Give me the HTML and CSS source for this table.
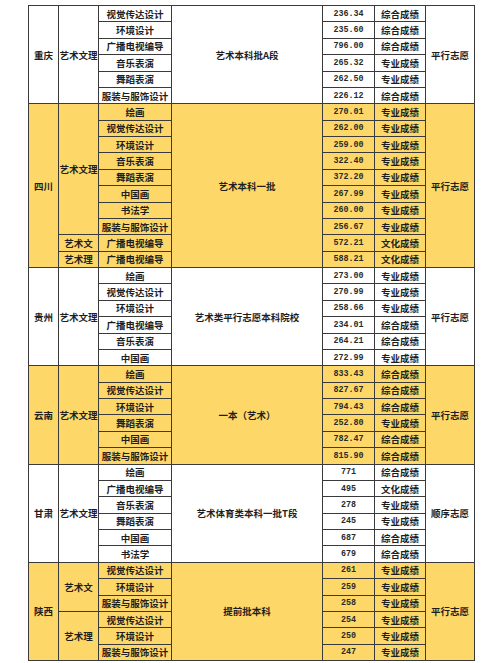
FILE: index.html
```html
<!DOCTYPE html>
<html lang="zh">
<head>
<meta charset="utf-8">
<link rel="stylesheet" href="styles.css">
</head>
<body>
<table class="sheet">
  <colgroup>
    <col class="c1"><col class="c2"><col class="c3"><col class="c4"><col class="c5"><col class="c6"><col class="c7">
  </colgroup>
  <tbody class="plain">
    <tr><td rowspan="6">重庆</td><td rowspan="6">艺术文理</td><td>视觉传达设计</td><td rowspan="6">艺术本科批A段</td><td class="num">236.34</td><td>综合成绩</td><td rowspan="6">平行志愿</td></tr>
    <tr><td>环境设计</td><td class="num">235.60</td><td>综合成绩</td></tr>
    <tr><td>广播电视编导</td><td class="num">796.00</td><td>综合成绩</td></tr>
    <tr><td>音乐表演</td><td class="num">265.32</td><td>专业成绩</td></tr>
    <tr><td>舞蹈表演</td><td class="num">262.50</td><td>专业成绩</td></tr>
    <tr><td>服装与服饰设计</td><td class="num">226.12</td><td>综合成绩</td></tr>
  </tbody>
  <tbody class="gold">
    <tr><td rowspan="10">四川</td><td rowspan="8">艺术文理</td><td>绘画</td><td rowspan="10">艺术本科一批</td><td class="num">270.01</td><td>专业成绩</td><td rowspan="10">平行志愿</td></tr>
    <tr><td>视觉传达设计</td><td class="num">262.00</td><td>专业成绩</td></tr>
    <tr><td>环境设计</td><td class="num">259.00</td><td>专业成绩</td></tr>
    <tr><td>音乐表演</td><td class="num">322.40</td><td>专业成绩</td></tr>
    <tr><td>舞蹈表演</td><td class="num">372.20</td><td>专业成绩</td></tr>
    <tr><td>中国画</td><td class="num">267.99</td><td>专业成绩</td></tr>
    <tr><td>书法学</td><td class="num">260.00</td><td>专业成绩</td></tr>
    <tr><td>服装与服饰设计</td><td class="num">256.67</td><td>专业成绩</td></tr>
    <tr><td>艺术文</td><td>广播电视编导</td><td class="num">572.21</td><td>文化成绩</td></tr>
    <tr><td>艺术理</td><td>广播电视编导</td><td class="num">588.21</td><td>文化成绩</td></tr>
  </tbody>
  <tbody class="plain">
    <tr><td rowspan="6">贵州</td><td rowspan="6">艺术文理</td><td>绘画</td><td rowspan="6">艺术类平行志愿本科院校</td><td class="num">273.00</td><td>专业成绩</td><td rowspan="6">平行志愿</td></tr>
    <tr><td>视觉传达设计</td><td class="num">270.99</td><td>专业成绩</td></tr>
    <tr><td>环境设计</td><td class="num">258.66</td><td>专业成绩</td></tr>
    <tr><td>广播电视编导</td><td class="num">234.01</td><td>综合成绩</td></tr>
    <tr><td>音乐表演</td><td class="num">264.21</td><td>综合成绩</td></tr>
    <tr><td>中国画</td><td class="num">272.99</td><td>专业成绩</td></tr>
  </tbody>
  <tbody class="gold">
    <tr><td rowspan="6">云南</td><td rowspan="6">艺术文理</td><td>绘画</td><td rowspan="6">一本（艺术）</td><td class="num">833.43</td><td>综合成绩</td><td rowspan="6">平行志愿</td></tr>
    <tr><td>视觉传达设计</td><td class="num">827.67</td><td>综合成绩</td></tr>
    <tr><td>环境设计</td><td class="num">794.43</td><td>综合成绩</td></tr>
    <tr><td>舞蹈表演</td><td class="num">252.80</td><td>专业成绩</td></tr>
    <tr><td>中国画</td><td class="num">782.47</td><td>综合成绩</td></tr>
    <tr><td>服装与服饰设计</td><td class="num">815.90</td><td>综合成绩</td></tr>
  </tbody>
  <tbody class="plain">
    <tr><td rowspan="6">甘肃</td><td rowspan="6">艺术文理</td><td>绘画</td><td rowspan="6">艺术体育类本科一批T段</td><td class="num">771</td><td>综合成绩</td><td rowspan="6">顺序志愿</td></tr>
    <tr><td>广播电视编导</td><td class="num">495</td><td>文化成绩</td></tr>
    <tr><td>音乐表演</td><td class="num">278</td><td>专业成绩</td></tr>
    <tr><td>舞蹈表演</td><td class="num">245</td><td>专业成绩</td></tr>
    <tr><td>中国画</td><td class="num">687</td><td>综合成绩</td></tr>
    <tr><td>书法学</td><td class="num">679</td><td>综合成绩</td></tr>
  </tbody>
  <tbody class="gold">
    <tr><td rowspan="6">陕西</td><td rowspan="3">艺术文</td><td>视觉传达设计</td><td rowspan="6">提前批本科</td><td class="num">261</td><td>专业成绩</td><td rowspan="6">平行志愿</td></tr>
    <tr><td>环境设计</td><td class="num">259</td><td>专业成绩</td></tr>
    <tr><td>服装与服饰设计</td><td class="num">258</td><td>专业成绩</td></tr>
    <tr><td rowspan="3">艺术理</td><td>视觉传达设计</td><td class="num">254</td><td>专业成绩</td></tr>
    <tr><td>环境设计</td><td class="num">250</td><td>专业成绩</td></tr>
    <tr><td>服装与服饰设计</td><td class="num">247</td><td>专业成绩</td></tr>
  </tbody>
</table>
</body>
</html>
```
FILE: styles.css
```css
html, body {
  margin: 0;
  padding: 0;
  background: #ffffff;
}

.sheet {
  margin: 5px 0 0 28px;
  border-collapse: collapse;
  table-layout: fixed;
  width: 446px;
  font-family: "Noto Sans CJK SC", "Noto Sans", sans-serif;
  font-weight: 700;
  font-size: 9.5px;
  color: #1e1e1e;
}

.c1 { width: 30px; }
.c2 { width: 40px; }
.c3 { width: 73px; }
.c4 { width: 151px; }
.c5 { width: 52px; }
.c6 { width: 51px; }
.c7 { width: 49px; }

.sheet tr {
  height: 16.375px;
}

.sheet td {
  border: 1px solid #3a3a3a;
  padding: 0;
  text-align: center;
  vertical-align: middle;
  line-height: 14px;
  white-space: nowrap;
  overflow: hidden;
}

.sheet .num {
  font-family: "Liberation Mono", "DejaVu Sans Mono", monospace;
  font-size: 8.4px;
  font-weight: 700;
  color: #2a2a2a;
}

.gold td {
  background: #fdd868;
}

.plain td {
  background: #ffffff;
}
```
